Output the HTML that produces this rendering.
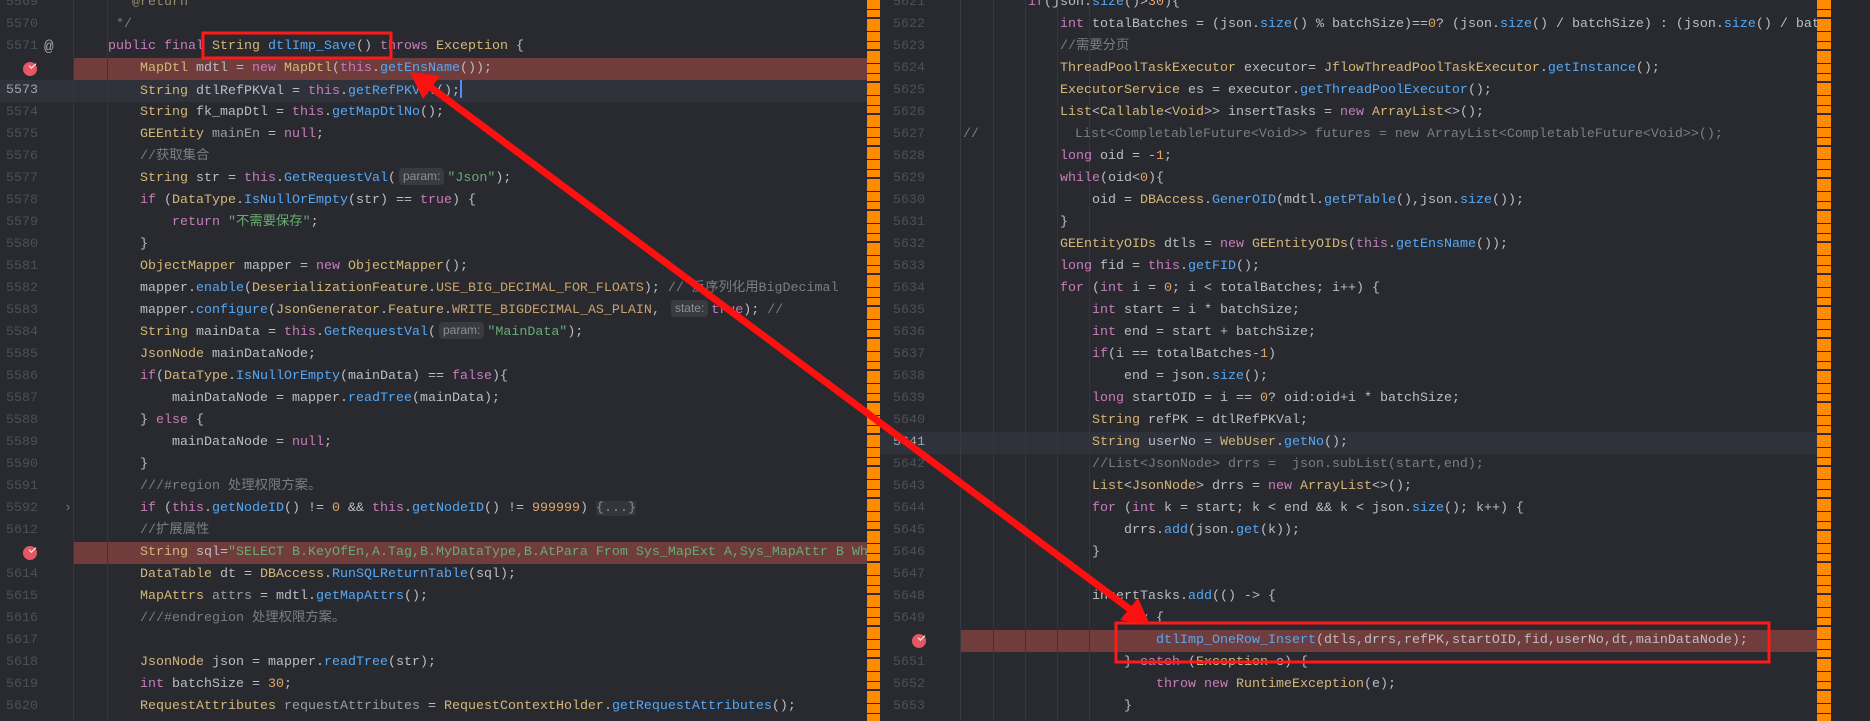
<!DOCTYPE html>
<html><head><meta charset="utf-8"><style>
*{margin:0;padding:0;box-sizing:border-box}
body{width:1870px;height:721px;overflow:hidden;background:#282a30;position:relative;font-family:"Liberation Mono","Noto Sans CJK SC",monospace;font-size:13.33px;color:#bcbec4}
.pane{position:absolute;top:0;height:721px;overflow:hidden;background:#282a30}
.l{position:absolute;height:22px;line-height:22px;white-space:pre}
.ln{position:absolute;width:32px;text-align:right;height:22px;line-height:22px;color:#4b5059}
.k{color:#c77dbb}.t{color:#d5b778}.f{color:#56a8f5}.s{color:#6aab73}.c{color:#7a7e85}.n{color:#e0a66a}.v{color:#9a9da3}.o{color:#c9a26d}
.hint{display:inline-block;font-family:"Liberation Sans",sans-serif;font-size:12px;color:#8c8f94;background:#393b40;border-radius:4px;line-height:17px;padding:0 4px;margin:0 3px;vertical-align:1px}
.bp{position:absolute;height:22px;background:#703c3c}
.cur{position:absolute;height:22px;background:#2f323a}
.dot{position:absolute;width:14px;height:14px;border-radius:50%;background:#e55765}
.dot:after{content:"";position:absolute;left:6px;top:1px;width:6px;height:3px;border-left:1.5px solid #fff;border-bottom:1.5px solid #fff;transform:rotate(-45deg)}
.g{position:absolute;top:0;width:1px;height:721px;background:#393b40}
.stripe{position:absolute;top:0;width:13px;height:721px;background:repeating-linear-gradient(#ff8c00 0 9px,#282a30 9px 10px,#ff8c00 10px 17px,#2b2d30 17px 19px,#ff8c00 19px 31px,#282a30 31px 32px)}
</style></head><body>

<!-- LEFT PANE -->
<div class="pane" style="left:0;width:867px">
<div class="cur" style="left:0;width:867px;top:80px"></div>
<div class="bp" style="left:73px;width:794px;top:58px"></div>
<div class="bp" style="left:73px;width:794px;top:542px"></div>
<div class="g" style="left:73px;background:#33363c"></div>
<div class="g" style="left:107px;background:#33363c"></div>

<div class="ln" style="left:6px;top:-8px">5569</div>
<div class="ln" style="left:6px;top:14px">5570</div>
<div class="ln" style="left:6px;top:36px">5571</div>
<div class="ln" style="left:6px;top:80px;color:#a1a3ab">5573</div>
<div class="ln" style="left:6px;top:102px">5574</div>
<div class="ln" style="left:6px;top:124px">5575</div>
<div class="ln" style="left:6px;top:146px">5576</div>
<div class="ln" style="left:6px;top:168px">5577</div>
<div class="ln" style="left:6px;top:190px">5578</div>
<div class="ln" style="left:6px;top:212px">5579</div>
<div class="ln" style="left:6px;top:234px">5580</div>
<div class="ln" style="left:6px;top:256px">5581</div>
<div class="ln" style="left:6px;top:278px">5582</div>
<div class="ln" style="left:6px;top:300px">5583</div>
<div class="ln" style="left:6px;top:322px">5584</div>
<div class="ln" style="left:6px;top:344px">5585</div>
<div class="ln" style="left:6px;top:366px">5586</div>
<div class="ln" style="left:6px;top:388px">5587</div>
<div class="ln" style="left:6px;top:410px">5588</div>
<div class="ln" style="left:6px;top:432px">5589</div>
<div class="ln" style="left:6px;top:454px">5590</div>
<div class="ln" style="left:6px;top:476px">5591</div>
<div class="ln" style="left:6px;top:498px">5592</div>
<div class="ln" style="left:6px;top:520px">5612</div>
<div class="ln" style="left:6px;top:564px">5614</div>
<div class="ln" style="left:6px;top:586px">5615</div>
<div class="ln" style="left:6px;top:608px">5616</div>
<div class="ln" style="left:6px;top:630px">5617</div>
<div class="ln" style="left:6px;top:652px">5618</div>
<div class="ln" style="left:6px;top:674px">5619</div>
<div class="ln" style="left:6px;top:696px">5620</div>
<div class="l" style="left:44px;top:36px;font-size:16px;color:#a1a3ab">@</div>
<div class="dot" style="left:23px;top:62px"></div>
<div class="dot" style="left:23px;top:546px"></div>
<div class="l" style="left:64px;top:498px;color:#6f737a">›</div>

<div class="l c" style="left:108px;top:-8px"> * <span style="color:#9a8a6a">@return</span></div>
<div class="l c" style="left:108px;top:14px"> */</div>
<div class="l" style="left:108px;top:36px"><span class="k">public final</span> <span class="t">String</span> <span class="f">dtlImp_Save</span>() <span class="k">throws</span> <span class="t">Exception</span> {</div>
<div class="l" style="left:140px;top:58px"><span class="t">MapDtl</span> mdtl = <span class="k">new</span> <span class="t">MapDtl</span>(<span class="k">this</span>.<span class="f">getEnsName</span>());</div>
<div class="l" style="left:140px;top:80px"><span class="t">String</span> dtlRefPKVal = <span class="k">this</span>.<span class="f">getRefPKVal</span>();<span style="display:inline-block;width:2px;height:18px;background:#548af7;vertical-align:-4px"></span></div>
<div class="l" style="left:140px;top:102px"><span class="t">String</span> fk_mapDtl = <span class="k">this</span>.<span class="f">getMapDtlNo</span>();</div>
<div class="l" style="left:140px;top:124px"><span class="t">GEEntity</span> <span class="v">mainEn</span> = <span class="k">null</span>;</div>
<div class="l c" style="left:140px;top:146px">//获取集合</div>
<div class="l" style="left:140px;top:168px"><span class="t">String</span> str = <span class="k">this</span>.<span class="f">GetRequestVal</span>(<span class="hint">param:</span><span class="s">"Json"</span>);</div>
<div class="l" style="left:140px;top:190px"><span class="k">if</span> (<span class="t">DataType</span>.<span class="f">IsNullOrEmpty</span>(str) == <span class="k">true</span>) {</div>
<div class="l" style="left:172px;top:212px"><span class="k">return</span> <span class="s">"不需要保存"</span>;</div>
<div class="l" style="left:140px;top:234px">}</div>
<div class="l" style="left:140px;top:256px"><span class="t">ObjectMapper</span> mapper = <span class="k">new</span> <span class="t">ObjectMapper</span>();</div>
<div class="l" style="left:140px;top:278px">mapper.<span class="f">enable</span>(<span class="t">DeserializationFeature</span>.<span class="o">USE_BIG_DECIMAL_FOR_FLOATS</span>); <span class="c">// 反序列化用BigDecimal</span></div>
<div class="l" style="left:140px;top:300px">mapper.<span class="f">configure</span>(<span class="t">JsonGenerator</span>.<span class="t">Feature</span>.<span class="o">WRITE_BIGDECIMAL_AS_PLAIN</span>, <span class="hint">state:</span><span class="k">true</span>); <span class="c">//</span></div>
<div class="l" style="left:140px;top:322px"><span class="t">String</span> mainData = <span class="k">this</span>.<span class="f">GetRequestVal</span>(<span class="hint">param:</span><span class="s">"MainData"</span>);</div>
<div class="l" style="left:140px;top:344px"><span class="t">JsonNode</span> mainDataNode;</div>
<div class="l" style="left:140px;top:366px"><span class="k">if</span>(<span class="t">DataType</span>.<span class="f">IsNullOrEmpty</span>(mainData) == <span class="k">false</span>){</div>
<div class="l" style="left:172px;top:388px">mainDataNode = mapper.<span class="f">readTree</span>(mainData);</div>
<div class="l" style="left:140px;top:410px">} <span class="k">else</span> {</div>
<div class="l" style="left:172px;top:432px">mainDataNode = <span class="k">null</span>;</div>
<div class="l" style="left:140px;top:454px">}</div>
<div class="l c" style="left:140px;top:476px">///#region 处理权限方案。</div>
<div class="l" style="left:140px;top:498px"><span class="k">if</span> (<span class="k">this</span>.<span class="f">getNodeID</span>() != <span class="n">0</span> &amp;&amp; <span class="k">this</span>.<span class="f">getNodeID</span>() != <span class="n">999999</span>) <span style="background:#33363c;color:#8c8f94">{...}</span></div>
<div class="l c" style="left:140px;top:520px">//扩展属性</div>
<div class="l" style="left:140px;top:542px"><span class="t">String</span> sql=<span class="s">"SELECT B.KeyOfEn,A.Tag,B.MyDataType,B.AtPara From Sys_MapExt A,Sys_MapAttr B Where</span></div>
<div class="l" style="left:140px;top:564px"><span class="t">DataTable</span> dt = <span class="t">DBAccess</span>.<span class="f">RunSQLReturnTable</span>(sql);</div>
<div class="l" style="left:140px;top:586px"><span class="t">MapAttrs</span> <span class="v">attrs</span> = mdtl.<span class="f">getMapAttrs</span>();</div>
<div class="l c" style="left:140px;top:608px">///#endregion 处理权限方案。</div>
<div class="l" style="left:140px;top:652px"><span class="t">JsonNode</span> json = mapper.<span class="f">readTree</span>(str);</div>
<div class="l" style="left:140px;top:674px"><span class="k">int</span> batchSize = <span class="n">30</span>;</div>
<div class="l" style="left:140px;top:696px"><span class="t">RequestAttributes</span> <span class="v">requestAttributes</span> = <span class="t">RequestContextHolder</span>.<span class="f">getRequestAttributes</span>();</div>
</div>
<div class="stripe" style="left:867px"></div>

<!-- RIGHT PANE -->
<div class="pane" style="left:880px;width:937px">
<div class="cur" style="left:0;width:937px;top:432px"></div>
<div class="bp" style="left:80px;width:857px;top:630px"></div>
<div class="g" style="left:80px"></div>
<div class="g" style="left:113px;background:#33363c"></div>
<div class="g" style="left:145px;background:#33363c"></div>
<div class="g" style="left:177px;background:#33363c"></div>
<div class="g" style="left:209px;background:#33363c"></div>
</div>
<div style="position:absolute;left:880px;top:0;width:937px;height:721px;overflow:hidden">
<div class="ln" style="left:13px;top:-8px">5621</div>
<div class="ln" style="left:13px;top:14px">5622</div>
<div class="ln" style="left:13px;top:36px">5623</div>
<div class="ln" style="left:13px;top:58px">5624</div>
<div class="ln" style="left:13px;top:80px">5625</div>
<div class="ln" style="left:13px;top:102px">5626</div>
<div class="ln" style="left:13px;top:124px">5627</div>
<div class="ln" style="left:13px;top:146px">5628</div>
<div class="ln" style="left:13px;top:168px">5629</div>
<div class="ln" style="left:13px;top:190px">5630</div>
<div class="ln" style="left:13px;top:212px">5631</div>
<div class="ln" style="left:13px;top:234px">5632</div>
<div class="ln" style="left:13px;top:256px">5633</div>
<div class="ln" style="left:13px;top:278px">5634</div>
<div class="ln" style="left:13px;top:300px">5635</div>
<div class="ln" style="left:13px;top:322px">5636</div>
<div class="ln" style="left:13px;top:344px">5637</div>
<div class="ln" style="left:13px;top:366px">5638</div>
<div class="ln" style="left:13px;top:388px">5639</div>
<div class="ln" style="left:13px;top:410px">5640</div>
<div class="ln" style="left:13px;top:432px;color:#a1a3ab">5641</div>
<div class="ln" style="left:13px;top:454px">5642</div>
<div class="ln" style="left:13px;top:476px">5643</div>
<div class="ln" style="left:13px;top:498px">5644</div>
<div class="ln" style="left:13px;top:520px">5645</div>
<div class="ln" style="left:13px;top:542px">5646</div>
<div class="ln" style="left:13px;top:564px">5647</div>
<div class="ln" style="left:13px;top:586px">5648</div>
<div class="ln" style="left:13px;top:608px">5649</div>
<div class="dot" style="left:32px;top:634px"></div>
<div class="ln" style="left:13px;top:652px">5651</div>
<div class="ln" style="left:13px;top:674px">5652</div>
<div class="ln" style="left:13px;top:696px">5653</div>

<div class="l" style="left:148px;top:-8px"><span class="k">if</span>(json.<span class="f">size</span>()&gt;<span class="n">30</span>){</div>
<div class="l" style="left:180px;top:14px"><span class="k">int</span> totalBatches = (json.<span class="f">size</span>() % batchSize)==<span class="n">0</span>? (json.<span class="f">size</span>() / batchSize) : (json.<span class="f">size</span>() / batchSize) + <span class="n">1</span>;</div>
<div class="l c" style="left:180px;top:36px">//需要分页</div>
<div class="l" style="left:180px;top:58px"><span class="t">ThreadPoolTaskExecutor</span> executor= <span class="t">JflowThreadPoolTaskExecutor</span>.<span class="f">getInstance</span>();</div>
<div class="l" style="left:180px;top:80px"><span class="t">ExecutorService</span> es = executor.<span class="f">getThreadPoolExecutor</span>();</div>
<div class="l" style="left:180px;top:102px"><span class="t">List</span>&lt;<span class="t">Callable</span>&lt;<span class="t">Void</span>&gt;&gt; insertTasks = <span class="k">new</span> <span class="t">ArrayList</span>&lt;&gt;();</div>
<div class="l c" style="left:83px;top:124px">//            List&lt;CompletableFuture&lt;Void&gt;&gt; futures = new ArrayList&lt;CompletableFuture&lt;Void&gt;&gt;();</div>
<div class="l" style="left:180px;top:146px"><span class="k">long</span> oid = -<span class="n">1</span>;</div>
<div class="l" style="left:180px;top:168px"><span class="k">while</span>(oid&lt;<span class="n">0</span>){</div>
<div class="l" style="left:212px;top:190px">oid = <span class="t">DBAccess</span>.<span class="f">GenerOID</span>(mdtl.<span class="f">getPTable</span>(),json.<span class="f">size</span>());</div>
<div class="l" style="left:180px;top:212px">}</div>
<div class="l" style="left:180px;top:234px"><span class="t">GEEntityOIDs</span> dtls = <span class="k">new</span> <span class="t">GEEntityOIDs</span>(<span class="k">this</span>.<span class="f">getEnsName</span>());</div>
<div class="l" style="left:180px;top:256px"><span class="k">long</span> fid = <span class="k">this</span>.<span class="f">getFID</span>();</div>
<div class="l" style="left:180px;top:278px"><span class="k">for</span> (<span class="k">int</span> i = <span class="n">0</span>; i &lt; totalBatches; i++) {</div>
<div class="l" style="left:212px;top:300px"><span class="k">int</span> start = i * batchSize;</div>
<div class="l" style="left:212px;top:322px"><span class="k">int</span> end = start + batchSize;</div>
<div class="l" style="left:212px;top:344px"><span class="k">if</span>(i == totalBatches-<span class="n">1</span>)</div>
<div class="l" style="left:244px;top:366px">end = json.<span class="f">size</span>();</div>
<div class="l" style="left:212px;top:388px"><span class="k">long</span> startOID = i == <span class="n">0</span>? oid:oid+i * batchSize;</div>
<div class="l" style="left:212px;top:410px"><span class="t">String</span> refPK = dtlRefPKVal;</div>
<div class="l" style="left:212px;top:432px"><span class="t">String</span> userNo = <span class="t">WebUser</span>.<span class="f">getNo</span>();</div>
<div class="l c" style="left:212px;top:454px">//List&lt;JsonNode&gt; drrs =  json.subList(start,end);</div>
<div class="l" style="left:212px;top:476px"><span class="t">List</span>&lt;<span class="t">JsonNode</span>&gt; drrs = <span class="k">new</span> <span class="t">ArrayList</span>&lt;&gt;();</div>
<div class="l" style="left:212px;top:498px"><span class="k">for</span> (<span class="k">int</span> k = start; k &lt; end &amp;&amp; k &lt; json.<span class="f">size</span>(); k++) {</div>
<div class="l" style="left:244px;top:520px">drrs.<span class="f">add</span>(json.<span class="f">get</span>(k));</div>
<div class="l" style="left:212px;top:542px">}</div>
<div class="l" style="left:212px;top:586px">insertTasks.<span class="f">add</span>(() -&gt; {</div>
<div class="l" style="left:244px;top:608px"><span class="k">try</span> {</div>
<div class="l" style="left:276px;top:630px"><span class="f">dtlImp_OneRow_Insert</span>(dtls,drrs,refPK,startOID,fid,userNo,dt,mainDataNode);</div>
<div class="l" style="left:244px;top:652px">} <span class="k">catch</span> (<span class="t">Exception</span> e) {</div>
<div class="l" style="left:276px;top:674px"><span class="k">throw new</span> <span class="t">RuntimeException</span>(e);</div>
<div class="l" style="left:244px;top:696px">}</div>
</div>
<div class="stripe" style="left:1817px;width:14px"></div>
<div style="position:absolute;left:1831px;top:0;width:39px;height:721px;background:#25272c"></div>

<svg width="1870" height="721" style="position:absolute;left:0;top:0">
<rect x="203" y="33" width="188" height="25" fill="none" stroke="#ff1a1a" stroke-width="3"/>
<rect x="1116" y="623" width="653" height="39" fill="none" stroke="#ff1a1a" stroke-width="3"/>
<line x1="425" y1="83" x2="1135" y2="613" stroke="#ff1010" stroke-width="7"/>
<polygon points="410,72 440,76 423,99" fill="#ff1010"/>
<polygon points="1150,625 1120,620 1138,598" fill="#ff1010"/>
</svg>
</body></html>
